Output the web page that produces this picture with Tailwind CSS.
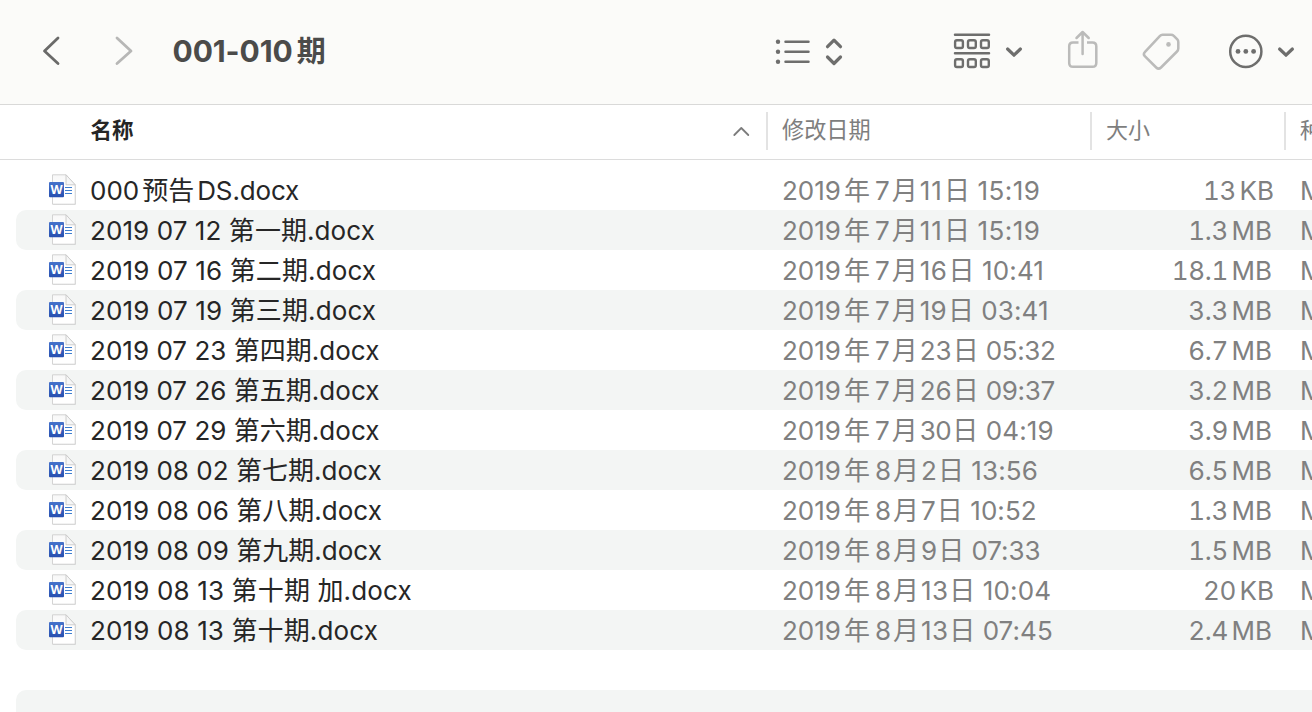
<!DOCTYPE html>
<html lang="zh-CN">
<head>
<meta charset="utf-8">
<title>001-010期</title>
<script src="https://cdn.jsdelivr.net/npm/@tailwindcss/browser@4"></script>
</head>
<body class="h-[712px] w-[1312px] overflow-hidden bg-white font-['Inter','Noto_Sans_CJK_SC',sans-serif] text-[#262626]">
<svg class="absolute size-0">
  <defs>
    <linearGradient id="blue" x1="0" y1="0" x2="0" y2="1"><stop offset="0" stop-color="#4672cb"/><stop offset="1" stop-color="#2750b0"/></linearGradient>
    <linearGradient id="sheet" x1="0" y1="0" x2="0" y2="1"><stop offset="0" stop-color="#f7f7f7"/><stop offset=".4" stop-color="#fff"/></linearGradient>
  </defs>
</svg>
<div class="flex h-[712px] flex-col">
  <header class="flex h-[105px] shrink-0 items-center border-b border-[#d9d9d8] bg-[#fbfbf9]">
    <svg class="h-[104px] w-[150px] shrink-0" viewBox="0 0 150 104" fill="none" stroke-width="2.8" stroke-linecap="round" stroke-linejoin="round">
      <path d="M58 38 44.5 51 58 63.5" stroke="#6a6a69"/>
      <path d="M117 38 131 51 117 63.5" stroke="#b7b7b6"/>
    </svg>
    <h1 class="ml-[22.5px] w-[577.5px] pb-[2px] whitespace-nowrap text-[30px] leading-[102px] font-bold text-[#4b4b4a]"><span class="tracking-[-0.1px]">001-010</span><span class="ml-[4px] text-[29px]">期</span></h1>
    <svg class="h-[104px] w-[562px] shrink-0" viewBox="750 0 562 104" fill="none" stroke="#6e6e6d" stroke-linecap="round" stroke-linejoin="round">
      <g stroke-width="2.5"><path d="M785.5 41.8H808.5M785.5 51.8H808.5M785.5 61.8H808.5"/></g>
      <g fill="#6e6e6d" stroke="none"><circle cx="778" cy="41.8" r="2.2"/><circle cx="778" cy="51.8" r="2.2"/><circle cx="778" cy="61.8" r="2.2"/></g>
      <path stroke-width="3.2" d="M827.5 46.7 834 40.2 840.5 46.7M827.5 57 834 63.5 840.5 57"/>
      <path stroke-width="2.5" d="M955 34.7H989M955 53.3H989"/>
      <g stroke-width="2.4"><rect x="955.1" y="40.2" width="7.8" height="7.8" rx="1.8"/><rect x="968" y="40.2" width="7.8" height="7.8" rx="1.8"/><rect x="981" y="40.2" width="7.8" height="7.8" rx="1.8"/><rect x="955.1" y="59.2" width="7.8" height="7.8" rx="1.8"/><rect x="968" y="59.2" width="7.8" height="7.8" rx="1.8"/><rect x="981" y="59.2" width="7.8" height="7.8" rx="1.8"/></g>
      <path stroke-width="3.2" d="M1007.6 49 1014 55.2 1020.4 49"/>
      <g stroke="#bbbbba" stroke-width="2.5"><path stroke-linecap="butt" d="M1078.5 42.4H1073Q1069.2 42.4 1069.2 46.2V63Q1069.2 66.8 1073 66.8H1092.5Q1096.3 66.8 1096.3 63V46.2Q1096.3 42.4 1092.5 42.4H1087"/><path d="M1082.6 54V32.5M1076.5 38 1082.6 32 1088.7 38"/>
      <path d="M1162.5 34.7H1171Q1172.6 34.7 1173.8 35.8L1177.3 39.4Q1178.3 40.4 1178.3 42V48.5Q1178.3 50.2 1177 51.5L1161 67.5Q1158.6 69.9 1156.2 67.5L1144.8 56.2Q1142.8 54.2 1144.8 52.2L1160 35.8Q1161 34.7 1162.5 34.7Z"/></g>
      <circle cx="1168.5" cy="44.4" r="2.3" fill="#bbbbba" stroke="none"/>
      <circle cx="1245.8" cy="51.4" r="15.6" stroke-width="2.5"/>
      <g fill="#6e6e6d" stroke="none"><circle cx="1238" cy="51.4" r="2.4"/><circle cx="1245.8" cy="51.4" r="2.4"/><circle cx="1253.6" cy="51.4" r="2.4"/></g>
      <path stroke-width="3.2" d="M1279.6 49 1286 55.2 1292.4 49"/>
    </svg>
  </header>
  <div class="flex h-[55px] shrink-0 items-center border-b border-[#dcdcdc] pb-[2px] text-[22px] leading-[50px] whitespace-nowrap text-[#7e7e7e]">
    <div class="flex w-[766px] items-center pl-[90.5px] font-bold text-[#262626]"><span class="grow pb-[2px] text-[21.5px]">名称</span>
      <svg class="mr-[16px] h-[12px] w-[18px]" viewBox="0 0 18 12" fill="none" stroke="#7c7c7c" stroke-width="1.8" stroke-linecap="round" stroke-linejoin="round"><path d="M2.3 10 9.3 3 16.3 10"/></svg>
    </div>
    <div class="h-[38px] w-[2px] bg-[#e3e3e3]"></div>
    <div class="w-[322px] pb-[2px] pl-[14px] text-[22.2px]">修改日期</div>
    <div class="h-[38px] w-[2px] bg-[#e3e3e3]"></div>
    <div class="w-[192px] pb-[2px] pl-[14px]">大小</div>
    <div class="h-[38px] w-[2px] bg-[#e3e3e3]"></div>
    <div class="w-[26px] overflow-hidden pb-[2px] pl-[14px]">种类</div>
  </div>
  <main id="list" class="flex grow flex-col overflow-hidden pt-[10px] text-[26px] leading-[40px] whitespace-nowrap"></main>
</div>

<script>
// name, extra name width, month, day, extra day width, time, extra time width, size, unit
const files = [
  ['000|预告|DS.docx', -1, 7, '11', 2, '15:19', 2.5, '13', 'KB'],
  ['2019 07 12 第一期.docx', 1.5, 7, '11', 2, '15:19', 2.5, '1.3', 'MB'],
  ['2019 07 16 第二期.docx', 2.5, 7, '16', 1, '10:41', 1, '18.1', 'MB'],
  ['2019 07 19 第三期.docx', 2.5, 7, '19', 0.5, '03:41', 0.5, '3.3', 'MB'],
  ['2019 07 23 第四期.docx', 0.5, 7, '23', 0, '05:32', -2, '6.7', 'MB'],
  ['2019 07 26 第五期.docx', 0.5, 7, '26', 0, '09:37', -2, '3.2', 'MB'],
  ['2019 07 29 第六期.docx', 0.5, 7, '30', -1, '04:19', 1, '3.9', 'MB'],
  ['2019 08 02 第七期.docx', 0.5, 8, '2', 0, '13:56', 0.5, '6.5', 'MB'],
  ['2019 08 06 第八期.docx', 0.5, 8, '7', 0, '10:52', 0.5, '1.3', 'MB'],
  ['2019 08 09 第九期.docx', 0.5, 8, '9', 0, '07:33', -0.5, '1.5', 'MB'],
  ['2019 08 13 第十期 加.docx', 3, 8, '13', 0.5, '10:04', 1, '20', 'KB'],
  ['2019 08 13 第十期.docx', 2.5, 8, '13', 0.5, '07:45', 0.5, '2.4', 'MB'],
];
const icon = `<svg class="ml-[32px] h-[34px] w-[30px] shrink-0" viewBox="0 0 30 34">
  <path d="M4.8 2.8H17.5L27.6 12.5V31.8H4.8Z" fill="#000" opacity=".16"/>
  <path d="M4.5 1.8H18L27.2 11.8V31.2H4.5Z" fill="url(#sheet)" stroke="#cfcfcf" stroke-width=".9"/>
  <path d="M18 1.8V11.8H27.2Z" fill="#f6f6f6" stroke="#c8c8c8" stroke-width=".9"/>
  <path d="M17 14.5H24M17 17.5H24M17 20.5H24" stroke="#3f7fd0" stroke-width="1.2"/>
  <rect x="1" y="9" width="15" height="15.2" rx="1" fill="url(#blue)"/>
  <text x="8.5" y="20.8" text-anchor="middle" font-family="Open Sans" font-weight="700" font-size="12.5" fill="#fff">W</text></svg>`;
const track = (text, extra) => `<span class="whitespace-pre" style="letter-spacing:${(extra / text.length).toFixed(3)}px">${text}</span>`;
const title = (name, extra) => {
  const [a, b, c] = name.split('|');
  return b ? `${a}<span class="mr-[3px] ml-[3px]">${b}</span>${track(c, extra)}` : track(name, extra);
};
document.getElementById('list').innerHTML = files.map(([name, ne, month, day, de, time, te, num, unit], i) => `
  <div class="ml-4 flex h-[40px] shrink-0 items-center rounded-l-[10px] ${i % 2 ? 'bg-[#f3f5f4]' : ''}">
    ${icon}
    <div class="ml-[12px] w-[692px] shrink-0 pt-[2px]">${title(name, ne)}</div>
    <div class="w-[322px] shrink-0 pt-[2px] text-[#808080]">2019<span class="mr-[5px] ml-[3px]">年</span>${month}<span class="mx-[2px]">月</span>${track(day, de)}<span class="ml-[1px]">日</span>${track(' ' + time, te)}</div>
    <div class="${unit === 'KB' ? 'mr-0 w-[170px]' : 'mr-[2px] w-[168px]'} shrink-0 pt-[2px] text-right text-[#808080]"><span class="tracking-[-0.3px] tabular-nums">${num}</span><span class="ml-[3.5px]">${unit}</span></div>
    <div class="w-[38px] shrink-0 overflow-hidden pt-[2px] pl-[26px] text-[#808080]">Microsoft Word</div>
  </div>`).join('') + '<div class="mt-[40px] ml-4 h-[40px] shrink-0 rounded-l-[10px] bg-[#f3f5f4]"></div>';
</script>
</body>
</html>
